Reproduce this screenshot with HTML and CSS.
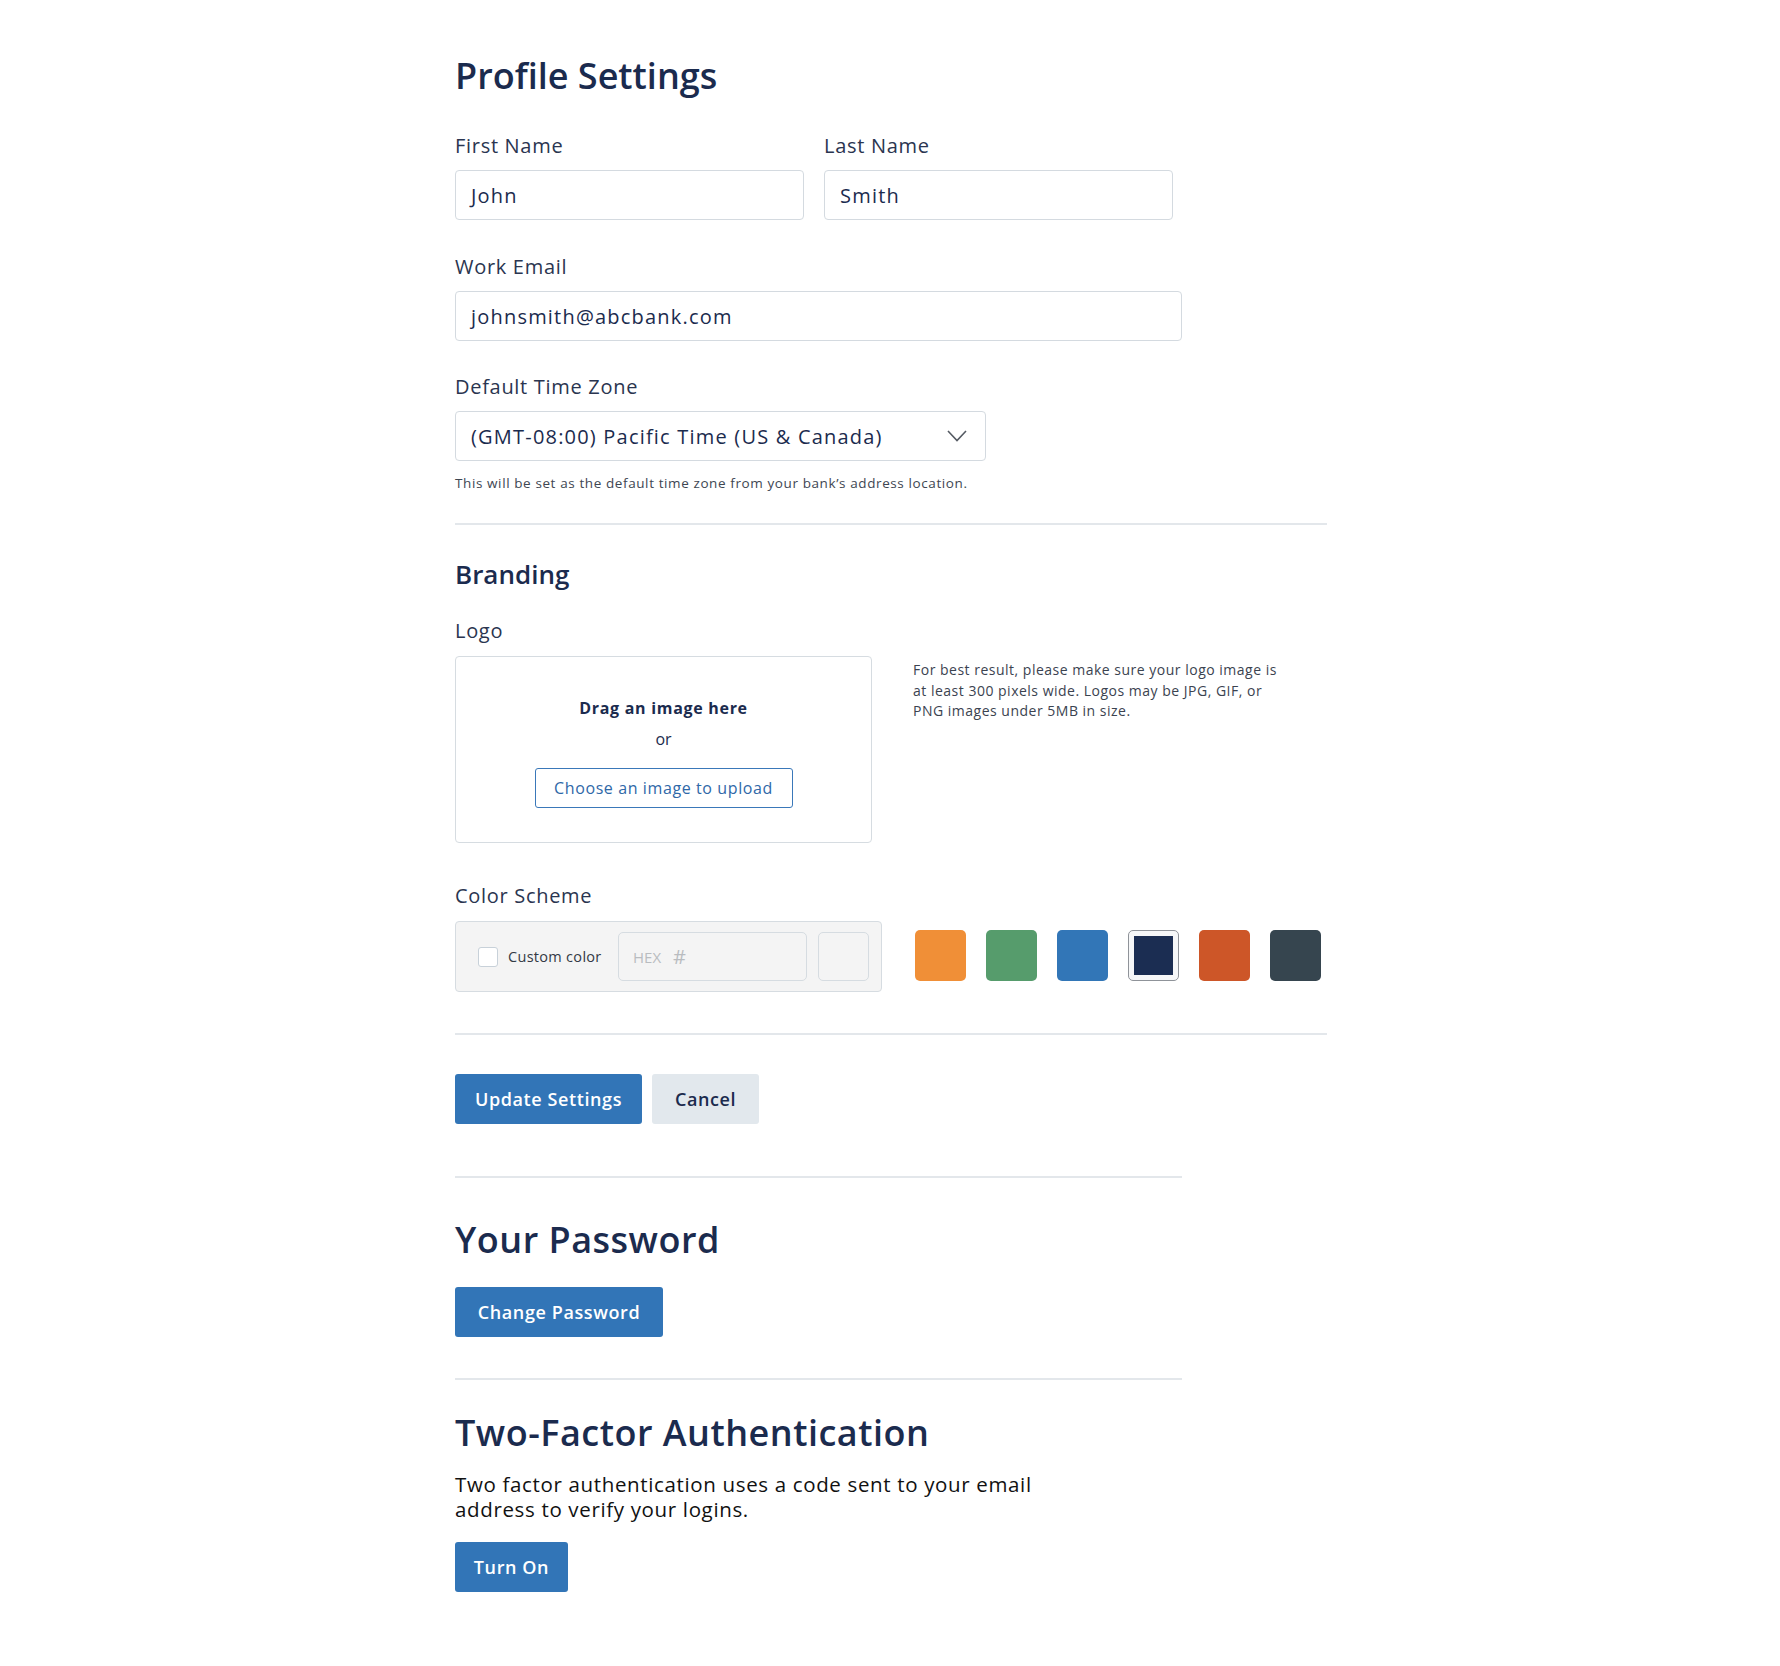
FILE: index.html
```html
<!DOCTYPE html>
<html lang="en">
<head>
<meta charset="utf-8">
<title>Profile Settings</title>
<link rel="stylesheet" href="styles.css">
</head>
<body>
<main class="page">
  <h1 class="title">Profile Settings</h1>

  <div class="name-row">
    <div class="field">
      <label class="label">First Name</label>
      <div class="input name-input">John</div>
    </div>
    <div class="field">
      <label class="label">Last Name</label>
      <div class="input name-input">Smith</div>
    </div>
  </div>

  <div class="field email-field">
    <label class="label">Work Email</label>
    <div class="input email-input">johnsmith@abcbank.com</div>
  </div>

  <div class="field tz-field">
    <label class="label">Default Time Zone</label>
    <div class="input select">
      <span>(GMT-08:00) Pacific Time (US &amp; Canada)</span>
      <svg class="chevron" width="20" height="12" viewBox="0 0 20 12"><path d="M1 1 L10 10.5 L19 1" fill="none" stroke="#555b63" stroke-width="1.6"/></svg>
    </div>
    <p class="help">This will be set as the default time zone from your bank’s address location.</p>
  </div>

  <hr class="rule rule-wide rule-1">

  <h2 class="section">Branding</h2>

  <label class="label logo-label">Logo</label>
  <div class="logo-row">
    <div class="dropzone">
      <div class="drag">Drag an image here</div>
      <div class="or">or</div>
      <button class="upload">Choose an image to upload</button>
    </div>
    <p class="logo-help">For best result, please make sure your logo image is at least 300 pixels wide. Logos may be JPG, GIF, or PNG images under 5MB in size.</p>
  </div>

  <label class="label color-label">Color Scheme</label>
  <div class="color-row">
    <div class="custom-box">
      <span class="checkbox"></span>
      <span class="custom-text">Custom color</span>
      <div class="hex"><span class="hex-ph">HEX</span><span class="hash">#</span></div>
      <div class="preview"></div>
    </div>
    <div class="swatches">
      <span class="swatch orange"></span>
      <span class="swatch green"></span>
      <span class="swatch blue"></span>
      <span class="swatch selected"><span class="inner"></span></span>
      <span class="swatch red"></span>
      <span class="swatch slate"></span>
    </div>
  </div>

  <hr class="rule rule-wide rule-2">

  <div class="actions">
    <button class="btn primary update">Update Settings</button>
    <button class="btn secondary">Cancel</button>
  </div>

  <hr class="rule rule-narrow rule-3">

  <h2 class="big">Your Password</h2>
  <button class="btn primary change">Change Password</button>

  <hr class="rule rule-narrow rule-4">

  <h2 class="big tfa-title">Two-Factor Authentication</h2>
  <p class="tfa-text">Two factor authentication uses a code sent to your email<br>address to verify your logins.</p>
  <button class="btn primary turn">Turn On</button>
</main>
</body>
</html>
```

FILE: styles.css
```css
* { box-sizing: border-box; }

html, body {
  margin: 0;
  background: #ffffff;
}

body {
  font-family: "Open Sans", "Noto Sans", "DejaVu Sans", sans-serif;
  color: #1b2b4e;
}

.page {
  width: 872px;
  margin-left: 455px;
  padding-top: 54px;
  padding-bottom: 60px;
}

.title {
  margin: 0;
  font-size: 36px;
  line-height: 44px;
  font-weight: 600;
  color: #1b2b4e;
}

.label {
  display: block;
  font-size: 20px;
  line-height: 24px;
  letter-spacing: 0.7px;
  color: #2a3550;
  margin-bottom: 12px;
}

.name-row {
  display: flex;
  gap: 20px;
  margin-top: 36px;
}

.input {
  height: 50px;
  border: 1.5px solid #d4dae0;
  border-radius: 4px;
  padding: 0 15px;
  display: flex;
  align-items: center;
  font-size: 20px;
  letter-spacing: 1.2px;
  color: #1b2b4e;
  background: #fff;
}

.name-input { width: 349px; }

.email-field { margin-top: 35px; }
.email-input { width: 727px; }

.tz-field { margin-top: 34px; }
.select {
  width: 531px;
  justify-content: space-between;
  padding-right: 18px;
}
.chevron { display: block; }

.help {
  margin: 12px 0 0;
  font-size: 13.5px;
  line-height: 20px;
  letter-spacing: 0.6px;
  color: #3e4652;
}

.rule {
  border: 0;
  height: 2px;
  background: #e3e7eb;
  margin: 0;
}
.rule-wide { width: 872px; }
.rule-narrow { width: 727px; }
.rule-1 { margin-top: 30px; }

.section {
  margin: 32px 0 0;
  font-size: 26px;
  line-height: 34px;
  font-weight: 600;
  color: #1b2b4e;
}

.logo-label { margin-top: 28px; margin-bottom: 13px; }

.logo-row {
  display: flex;
  align-items: flex-start;
  gap: 41px;
}

.dropzone {
  width: 417px;
  height: 187px;
  border: 1.5px solid #d6dce1;
  border-radius: 4px;
  display: flex;
  flex-direction: column;
  align-items: center;
  padding-top: 40px;
}

.drag {
  font-size: 16px;
  line-height: 22px;
  font-weight: 700;
  letter-spacing: 0.7px;
  color: #1b2b4e;
}

.or {
  margin-top: 9px;
  font-size: 16px;
  line-height: 22px;
  color: #1b2b4e;
}

.upload {
  margin-top: 18px;
  width: 258px;
  height: 40px;
  border: 1.5px solid #3a78b9;
  border-radius: 3px;
  background: #fff;
  font-family: inherit;
  font-size: 16px;
  letter-spacing: 0.6px;
  color: #2f68a8;
  padding: 0;
}

.logo-help {
  margin: 4px 0 0;
  width: 372px;
  font-size: 14px;
  line-height: 20.5px;
  letter-spacing: 0.5px;
  color: #3b4350;
}

.color-label { margin-top: 41px; margin-bottom: 13px; }

.color-row {
  display: flex;
  align-items: flex-start;
  gap: 33px;
}

.custom-box {
  width: 427px;
  height: 71px;
  background: #f4f4f4;
  border: 1.5px solid #d6dce1;
  border-radius: 4px;
  display: flex;
  align-items: center;
  padding-left: 22px;
}

.checkbox {
  width: 20px;
  height: 20px;
  border: 1.5px solid #c8d1d9;
  border-radius: 3px;
  background: #fff;
  flex: none;
}

.custom-text {
  margin-left: 10px;
  font-size: 14.5px;
  letter-spacing: 0.3px;
  color: #333a45;
  width: 110px;
}

.hex {
  width: 189px;
  height: 49px;
  border: 1.5px solid #d6dce1;
  border-radius: 5px;
  display: flex;
  align-items: center;
  padding-left: 14px;
  color: #b9bcc0;
}
.hex-ph { font-size: 15px; }
.hash { font-size: 20px; margin-left: 12px; }

.preview {
  margin-left: 11px;
  width: 51px;
  height: 49px;
  border: 1.5px solid #d6dce1;
  border-radius: 5px;
}

.swatches {
  display: flex;
  gap: 20px;
  margin-top: 9px;
}

.swatch {
  width: 51px;
  height: 51px;
  border-radius: 5px;
  display: block;
}
.orange { background: #f08f37; }
.green { background: #569c6c; }
.blue { background: #3276b7; }
.red { background: #cd5628; }
.slate { background: #36454f; }
.selected {
  background: #f6f7f8;
  border: 1.5px solid #8f9399;
  padding: 5px;
}
.selected .inner {
  display: block;
  width: 100%;
  height: 100%;
  background: #1b2d52;
}

.rule-2 { margin-top: 41px; }

.actions {
  display: flex;
  gap: 10px;
  margin-top: 39px;
}

.btn {
  height: 50px;
  border: 0;
  border-radius: 3px;
  font-family: inherit;
  font-size: 18px;
  font-weight: 600;
  letter-spacing: 0.6px;
  padding: 0;
  display: block;
}
.primary { background: #3275b7; color: #fff; }
.secondary { background: #e2e8ed; color: #1b2b4e; }
.update { width: 187px; }
.secondary { width: 107px; }
.change { width: 208px; margin-top: 25px; }
.turn { width: 113px; }

.rule-3 { margin-top: 52px; }

.big {
  margin: 40px 0 0;
  font-size: 36px;
  line-height: 44px;
  font-weight: 600;
  letter-spacing: 0.5px;
  color: #1b2b4e;
}

.rule-4 { margin-top: 41px; }

.tfa-title { margin-top: 31px; }

.tfa-text {
  margin: 17px 0 21px;
  font-size: 20.5px;
  line-height: 24.5px;
  letter-spacing: 0.65px;
  color: #111;
}
```
